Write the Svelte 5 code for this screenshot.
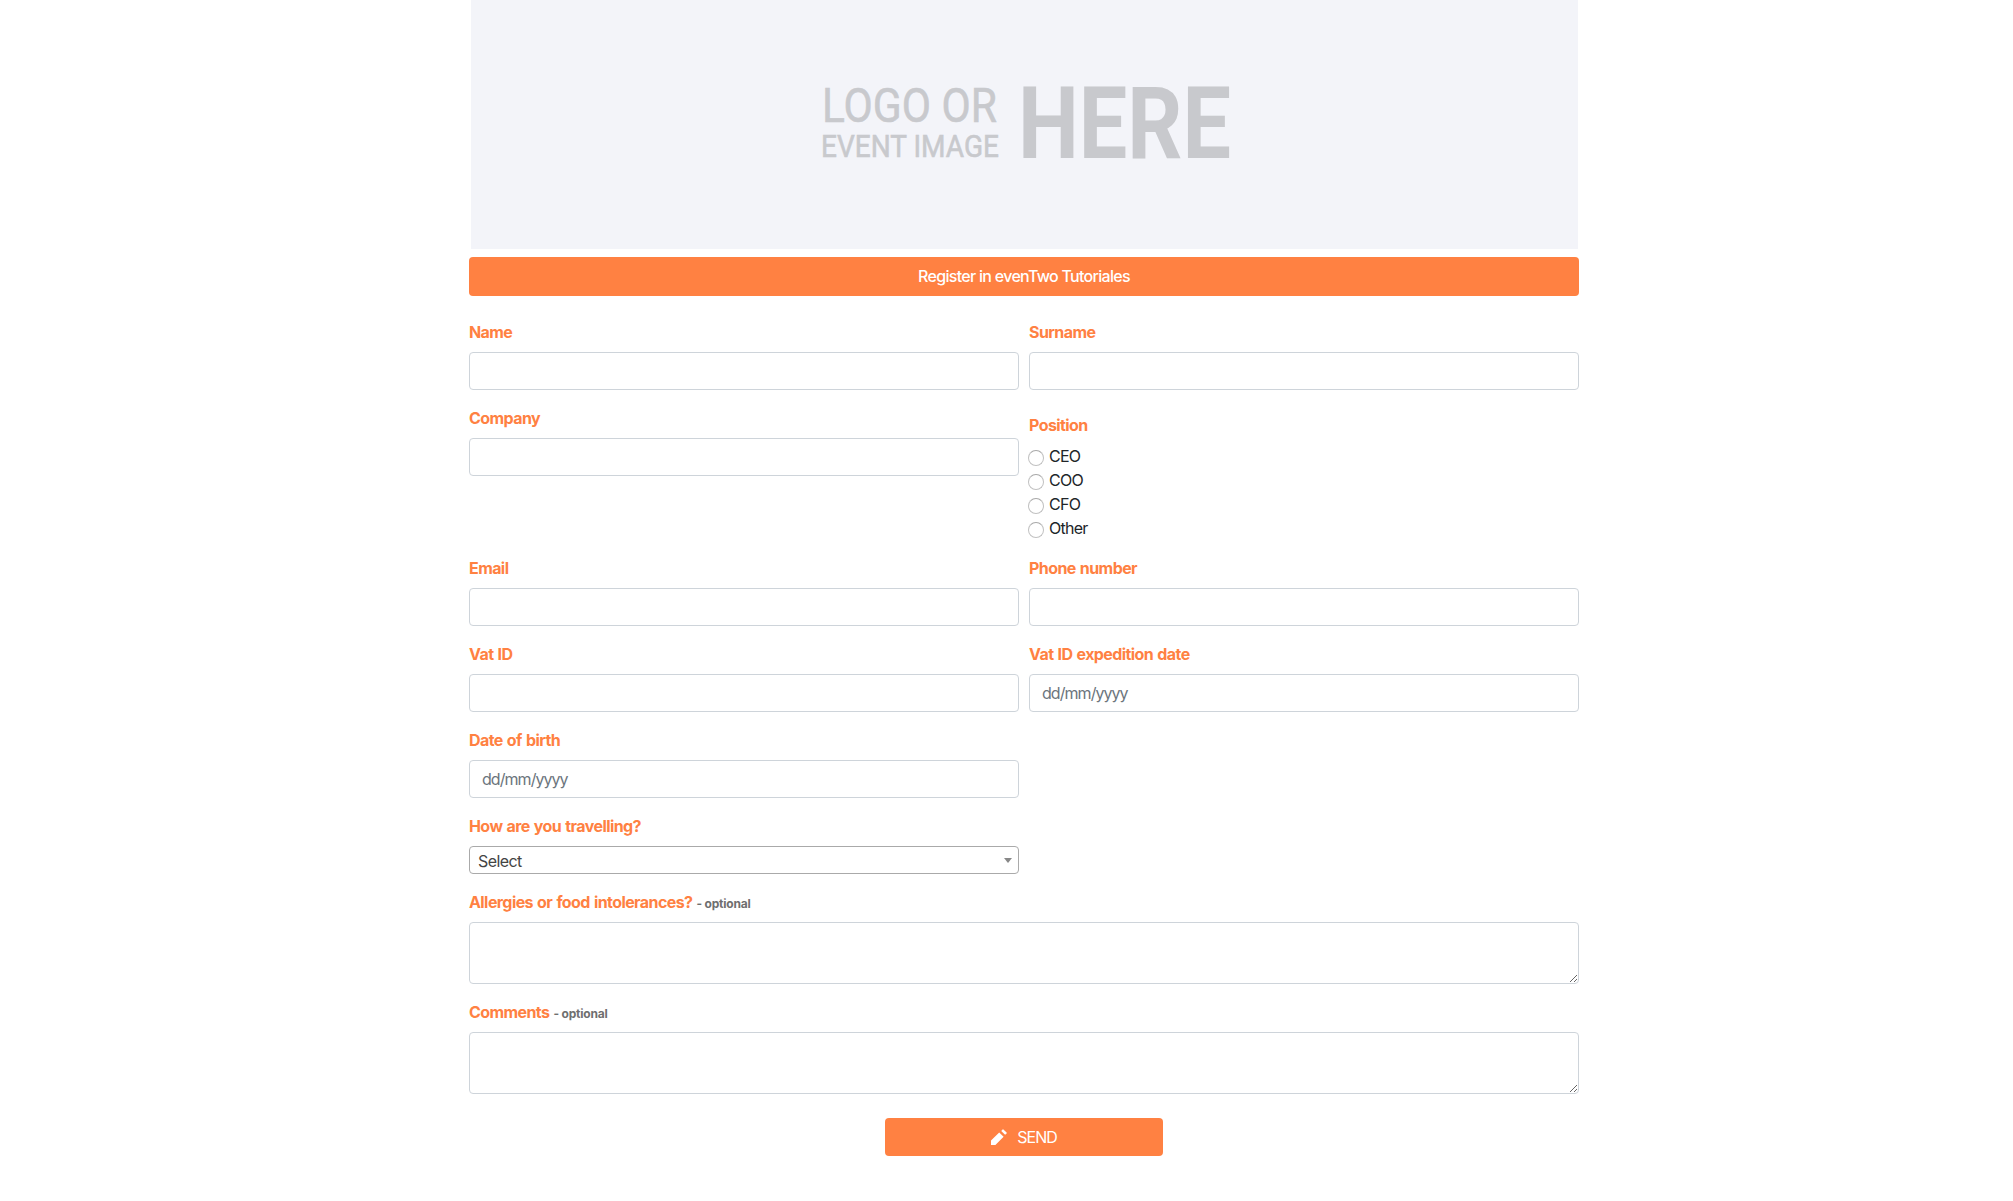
<script lang="ts">
	type Field = {
		id: string;
		label: string;
		type: 'text' | 'radio' | 'select' | 'textarea';
		placeholder?: string;
		options?: string[];
		optional?: boolean;
	};

	// null keeps the right column of a row empty
	const rows: (Field | null)[][] = [
		[
			{ id: 'name', label: 'Name', type: 'text' },
			{ id: 'surname', label: 'Surname', type: 'text' },
		],
		[
			{ id: 'company', label: 'Company', type: 'text' },
			{ id: 'position', label: 'Position', type: 'radio', options: ['CEO', 'COO', 'CFO', 'Other'] },
		],
		[
			{ id: 'email', label: 'Email', type: 'text' },
			{ id: 'phone', label: 'Phone number', type: 'text' },
		],
		[
			{ id: 'vat', label: 'Vat ID', type: 'text' },
			{ id: 'vat_date', label: 'Vat ID expedition date', type: 'text', placeholder: 'dd/mm/yyyy' },
		],
		[{ id: 'birth', label: 'Date of birth', type: 'text', placeholder: 'dd/mm/yyyy' }, null],
		[{ id: 'travel', label: 'How are you travelling?', type: 'select' }, null],
		[{ id: 'allergies', label: 'Allergies or food intolerances?', type: 'textarea', optional: true }],
		[{ id: 'comments', label: 'Comments', type: 'textarea', optional: true }],
	];

	let position = $state('');
</script>

<main class="register">
	<svg class="register__banner" viewBox="0 0 1107 249" role="img" aria-label="Event image">
		<g stroke="#c8c9cd" stroke-width="0.6">
			<text x="351" y="122" font-size="49" textLength="175" lengthAdjust="spacingAndGlyphs">LOGO OR</text>
			<text x="350" y="157" font-size="32" textLength="178" lengthAdjust="spacingAndGlyphs">EVENT IMAGE</text>
		</g>
		<text x="547" y="158" font-size="101" font-weight="700" textLength="213" lengthAdjust="spacingAndGlyphs">HERE</text>
	</svg>

	<h1 class="register__title">Register in evenTwo Tutoriales</h1>

	<form class="form" onsubmit={(e) => e.preventDefault()}>
		{#each rows as row}
			<div class="form__row">
				{#each row as field}
					{#if !field}
						<div class="form__group"></div>
					{:else if field.type === 'radio'}
						<div class="form__group" role="radiogroup" aria-labelledby={field.id}>
							<div class="form__label form__label--legend" id={field.id}>{field.label}</div>
							{#each field.options ?? [] as option}
								<label class="form__check">
									<input type="radio" name={field.id} value={option} bind:group={position} />
									<span>{option}</span>
								</label>
							{/each}
						</div>
					{:else}
						<div class="form__group">
							<label class="form__label" for={field.id}>
								{field.label}{#if field.optional}<small>- optional</small>{/if}
							</label>
							{#if field.type === 'select'}
								<button class="form__select" type="button" id={field.id}>
									<span>Select</span>
									<span class="form__arrow" aria-hidden="true"></span>
								</button>
							{:else if field.type === 'textarea'}
								<textarea class="form__control form__control--area" id={field.id}></textarea>
							{:else}
								<input class="form__control" type="text" id={field.id} placeholder={field.placeholder} />
							{/if}
						</div>
					{/if}
				{/each}
			</div>
		{/each}

		<button class="form__submit" type="submit">
			<svg width="16" height="16" viewBox="0 0 16 16" aria-hidden="true">
				<path d="M0 16V11.6L8.2 3.4L12.6 7.8L4.4 16ZM10.2 1.9L11.6 .4Q12 0 12.4 .4L15.6 3.6Q16 4 15.6 4.4L14.1 5.8Z" fill="currentColor" />
			</svg>
			<span>SEND</span>
		</button>
	</form>
</main>

<style>
	:global(body) {
		margin: 0;
		background: #fff;
	}

	.register {
		--accent: #ff8142;
		box-sizing: border-box;
		width: 1110px;
		margin-left: 469px;
		font-family: Inter, 'Liberation Sans', sans-serif;
		font-size: 16px;
		line-height: 24px;
		letter-spacing: -0.6px;
		color: #212529;
	}

	.register__banner {
		display: block;
		width: 1107px;
		height: 249px;
		margin: 0 1px 8px 2px;
		background: #f3f4f9;
		fill: #c8c9cd;
		font-family: Roboto, sans-serif;
		letter-spacing: 0;
	}

	.register__title {
		margin: 0 0 24px;
		height: 39px;
		border-radius: 4px;
		background: var(--accent);
		color: #fff;
		font-size: 16px;
		font-weight: 500;
		line-height: 39px;
		letter-spacing: -0.7px;
		text-align: center;
	}

	.form {
		display: flex;
		flex-direction: column;
	}
	.form__row {
		display: flex;
		gap: 10px;
		margin-bottom: 16px;
	}
	.form__group {
		flex: 1 1 0;
		min-width: 0;
	}
	.form__label {
		display: block;
		margin-bottom: 8px;
		color: var(--accent);
		font-weight: 700;
		letter-spacing: -0.58px;
		word-spacing: 0.9px;
	}
	.form__label--legend {
		margin-bottom: 0;
		padding: 7px 0;
	}
	.form__label small {
		margin-left: 4px;
		color: #6f6f6f;
		font-size: 12px;
		font-weight: 700;
		line-height: 1;
		letter-spacing: -0.2px;
		word-spacing: 0;
	}

	.form__control {
		display: block;
		box-sizing: border-box;
		width: 100%;
		height: 38px;
		padding: 6px 12px;
		border: 1px solid #ced4da;
		border-radius: 4px;
		background: #fff;
		color: #495057;
		font: inherit;
		letter-spacing: inherit;
	}
	.form__control::placeholder {
		color: #6c757d;
		letter-spacing: -0.95px;
		opacity: 1;
	}
	.form__control--area {
		height: 62px;
		resize: vertical;
	}

	.form__check {
		display: flex;
		height: 24px;
		letter-spacing: -0.75px;
	}
	.form__check input {
		appearance: none;
		box-sizing: border-box;
		width: 16px;
		height: 16px;
		margin: 6px 5px 0 -1px;
		border: 1px solid #c1c1c1;
		border-top-color: #a8a8a8;
		border-radius: 50%;
		background: #fff;
	}
	.form__check input:checked {
		border: 5px solid var(--accent);
	}

	.form__select {
		display: flex;
		align-items: center;
		justify-content: space-between;
		box-sizing: border-box;
		width: 100%;
		height: 28px;
		padding: 2px 6px 0 8px;
		border: 1px solid #aaa;
		border-radius: 4px;
		background: #fff;
		color: #444;
		font: inherit;
		letter-spacing: inherit;
	}
	.form__arrow {
		margin-top: -2px;
		border: 4px solid transparent;
		border-top: 5px solid #888;
		border-bottom: 0;
	}

	.form__submit {
		display: flex;
		align-items: center;
		justify-content: center;
		gap: 10px;
		align-self: center;
		width: 278px;
		height: 38px;
		margin-top: 8px;
		padding: 0;
		border: 0;
		border-radius: 4px;
		background: var(--accent);
		color: #fff;
		font: inherit;
		letter-spacing: -1px;
	}
</style>
